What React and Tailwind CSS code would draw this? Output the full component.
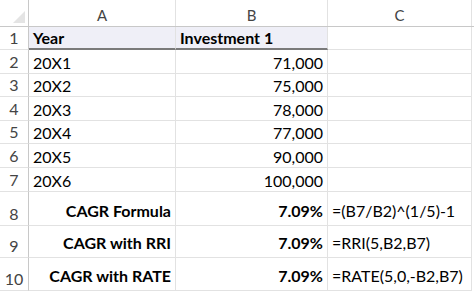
import React from "react";

const rows = [
  { n: "1", a: "Year", b: "Investment 1", c: "", h: "h-[23px]", head: true },
  { n: "2", a: "20X1", b: "71,000", c: "", h: "h-[24px]" },
  { n: "3", a: "20X2", b: "75,000", c: "", h: "h-[23px]" },
  { n: "4", a: "20X3", b: "78,000", c: "", h: "h-[24px]" },
  { n: "5", a: "20X4", b: "77,000", c: "", h: "h-[23px]" },
  { n: "6", a: "20X5", b: "90,000", c: "", h: "h-[24px]" },
  { n: "7", a: "20X6", b: "100,000", c: "", h: "h-[24px]" },
  { n: "8", a: "CAGR Formula", b: "7.09%", c: "=(B7/B2)^(1/5)-1", h: "h-[34px]", calc: true },
  { n: "9", a: "CAGR with RRI", b: "7.09%", c: "=RRI(5,B2,B7)", h: "h-[32px]", calc: true },
  { n: "10", a: "CAGR with RATE", b: "7.09%", c: "=RATE(5,0,-B2,B7)", h: "h-[33px]", calc: true },
];

const Row = ({ r }) => {
  const line = r.head ? "border-b-2 border-b-[#7a7a7a]" : "border-b border-b-[#e2e2e2]";
  return (
    <div className={`flex ${r.h}`}>
      <div className="w-[29px] shrink-0 flex items-end justify-center pb-[3px] border-r border-[#c8c8c8] border-b border-b-[#e2e2e2] text-[#444]">
        {r.n}
      </div>
      <div
        className={`w-[147px] shrink-0 flex items-end pb-[2px] px-[4px] border-r border-r-[#e2e2e2] ${line} ${
          r.head ? "bg-[#efeff7] font-bold" : ""
        } ${r.calc ? "justify-end font-bold pb-[6px]" : ""}`}
      >
        {r.a}
      </div>
      <div
        className={`w-[152px] shrink-0 flex items-end pb-[2px] px-[4px] border-r border-r-[#e2e2e2] ${line} ${
          r.head ? "bg-[#efeff7] font-bold justify-start" : "justify-end"
        } ${r.calc ? "font-bold pb-[6px]" : ""}`}
      >
        {r.b}
      </div>
      <div
        className={`w-[144px] shrink-0 flex items-end px-[4px] border-r border-r-[#e2e2e2] border-b border-b-[#e2e2e2] ${
          r.calc ? "pb-[6px]" : "pb-[2px]"
        }`}
      >
        {r.c}
      </div>
    </div>
  );
};

export default function App() {
  return (
    <div className="w-[474px] h-[293px] bg-white overflow-hidden text-black text-[16px] leading-none font-['Lato',_sans-serif]">
      <div className="flex h-[27px] border-b border-[#c8c8c8] text-[#444] text-[15px]">
        <div className="w-[29px] shrink-0 border-r border-[#c8c8c8] flex items-end justify-end pr-[3px] pb-[3px]">
          <svg width="12" height="12" viewBox="0 0 12 12">
            <polygon points="12,0 12,12 0,12" fill="#e4e4e4" />
          </svg>
        </div>
        <div className="w-[147px] shrink-0 flex items-center justify-center border-r border-[#e2e2e2] pt-[5px]">A</div>
        <div className="w-[152px] shrink-0 flex items-center justify-center border-r border-[#e2e2e2] pt-[5px]">B</div>
        <div className="w-[144px] shrink-0 flex items-center justify-center border-r border-[#e2e2e2] pt-[5px]">C</div>
      </div>
      {rows.map((r) => (
        <Row key={r.n} r={r} />
      ))}
    </div>
  );
}
